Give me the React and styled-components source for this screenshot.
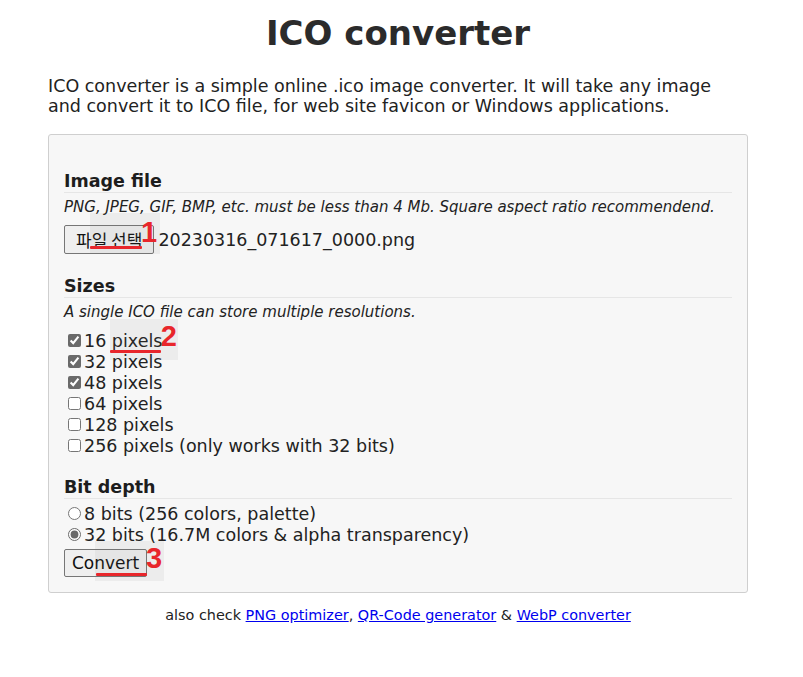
import React from 'react';
import styled, { createGlobalStyle } from 'styled-components';

const GlobalStyle = createGlobalStyle`
  body {
    margin: 0;
    background: #fff;
    font-family: 'DejaVu Sans', Verdana, sans-serif;
    color: #222;
  }
`;

const Page = styled.div`
  width: 700px;
  margin-left: 48px;
  padding-bottom: 40px;
`;

const Title = styled.h1`
  margin: 13px 0 0;
  font-size: 34px;
  line-height: 40px;
  text-align: center;
  color: #2b2b2b;
`;

const Intro = styled.p`
  margin: 23px 0 18px;
  font-size: 17.5px;
  line-height: 20px;
  color: #222;
`;

const Panel = styled.div`
  background: #f7f7f7;
  border: 1px solid #cfcfcf;
  border-radius: 3px;
  padding: 36px 15px 15px;
`;

const Section = styled.section`
  margin-bottom: ${(p) => p.gap || 0}px;
`;

const Heading = styled.h3`
  margin: 0;
  padding-bottom: 1px;
  font-size: 17.5px;
  line-height: 20px;
  border-bottom: 1px solid #e6e6e6;
  color: #1d1d1d;
`;

const Hint = styled.div`
  margin: 4px 0 8px;
  font-size: 15px;
  line-height: 20px;
  font-style: italic;
  color: #222;
`;

const FileRow = styled.div`
  display: flex;
  align-items: center;
  margin-top: ${(p) => p.top || 0}px;
  font-size: 17.5px;
`;

const Button = styled.button`
  font-family: ${(p) => (p.korean ? "'Noto Sans CJK KR', 'DejaVu Sans', sans-serif" : "'DejaVu Sans', sans-serif")};
  font-size: 17px;
  height: ${(p) => p.h || 28}px;
  padding: 0 ${(p) => (p.korean ? 11 : 7)}px;
  background: #efefef;
  border: 1px solid #767676;
  border-radius: 2px;
  color: #111;
  cursor: pointer;
`;

const FileName = styled.span`
  margin-left: 4px;
`;

const OptionList = styled.div`
  display: flex;
  flex-direction: column;
  margin-top: ${(p) => p.top || 0}px;
`;

const Option = styled.label`
  display: flex;
  align-items: center;
  height: 21px;
  font-size: 17.5px;
  color: #222;

  input {
    width: 13px;
    height: 13px;
    margin: 0 3px 0 4px;
    accent-color: #6a6a6a;
  }
`;

const Marked = styled.span`
  position: relative;
  display: inline-flex;
  align-items: center;
`;

const Highlight = styled.span`
  position: absolute;
  left: ${(p) => p.left}px;
  top: ${(p) => p.top}px;
  width: ${(p) => p.w}px;
  height: ${(p) => p.h}px;
  background: rgba(120, 120, 120, 0.08);
  pointer-events: none;
`;

const Underline = styled.span`
  position: absolute;
  left: ${(p) => p.left}px;
  top: ${(p) => p.top}px;
  width: ${(p) => p.w}px;
  height: 3px;
  background: #e8262b;
  border-radius: 1px;
`;

const Number = styled.span`
  position: absolute;
  left: ${(p) => p.left}px;
  top: ${(p) => p.top}px;
  font-family: 'Liberation Sans', Arial, sans-serif;
  font-weight: 700;
  font-size: 29px;
  line-height: 29px;
  color: #e8262b;
`;

const Footer = styled.div`
  margin-top: 12px;
  text-align: center;
  font-size: 14.4px;
  line-height: 20px;
  color: #222;

  a {
    color: #0000ee;
  }
`;

const sizes = [
  { px: 16, on: true },
  { px: 32, on: true },
  { px: 48, on: true },
  { px: 64, on: false },
  { px: 128, on: false },
  { px: 256, on: false, note: ' (only works with 32 bits)' },
];

function App() {
  return (
    <>
      <GlobalStyle />
      <Page>
        <Title>ICO converter</Title>
        <Intro>
          ICO converter is a simple online .ico image converter. It will take any image and convert it to ICO file,
          for web site favicon or Windows applications.
        </Intro>

        <Panel>
          <Section gap={22}>
            <Heading>Image file</Heading>
            <Hint>PNG, JPEG, GIF, BMP, etc. must be less than 4 Mb. Square aspect ratio recommendend.</Hint>
            <FileRow>
              <Marked>
                <Highlight left={26} top={-12} w={70} h={41} />
                <Button korean h={29}>파일 선택</Button>
                <Underline left={26} top={21} w={52} />
                <Number left={77} top={-7}>1</Number>
              </Marked>
              <FileName>20230316_071617_0000.png</FileName>
            </FileRow>
          </Section>

          <Section gap={21}>
            <Heading>Sizes</Heading>
            <Hint>A single ICO file can store multiple resolutions.</Hint>
            <OptionList>
              {sizes.map((s) => (
                <Option key={s.px}>
                  <input type="checkbox" defaultChecked={s.on} />
                  {s.px === 16 ? (
                    <Marked>
                      16&nbsp;
                      <Marked>
                        <Highlight left={-2} top={-12} w={68} h={41} />
                        pixels
                        <Underline left={-2} top={19} w={51} />
                        <Number left={49} top={-9}>2</Number>
                      </Marked>
                    </Marked>
                  ) : (
                    <span>
                      {s.px} pixels{s.note}
                    </span>
                  )}
                </Option>
              ))}
            </OptionList>
          </Section>

          <Section>
            <Heading>Bit depth</Heading>
            <OptionList top={4}>
              <Option>
                <input type="radio" name="depth" />
                8 bits (256 colors, palette)
              </Option>
              <Option>
                <input type="radio" name="depth" defaultChecked />
                32 bits (16.7M colors &amp; alpha transparency)
              </Option>
            </OptionList>
            <FileRow top={4}>
              <Marked>
                <Highlight left={31} top={-8} w={69} h={40} />
                <Button h={28}>Convert</Button>
                <Underline left={32} top={24} w={51} />
                <Number left={82} top={-5}>3</Number>
              </Marked>
            </FileRow>
          </Section>
        </Panel>

        <Footer>
          also check <a href="#png">PNG optimizer</a>, <a href="#qr">QR-Code generator</a> &amp;{' '}
          <a href="#webp">WebP converter</a>
        </Footer>
      </Page>
    </>
  );
}

export default App;
